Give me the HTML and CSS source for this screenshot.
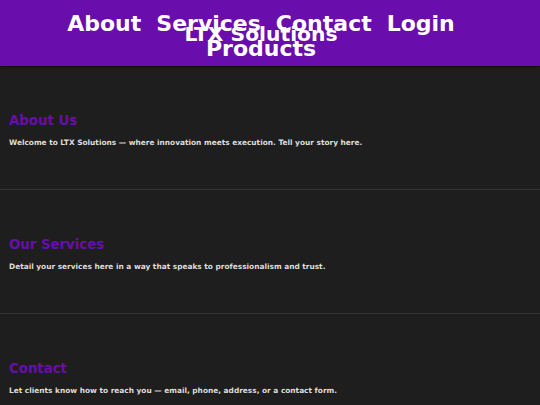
FILE: index.html
```html
<!DOCTYPE html>
<html lang="en">
<head>
    <meta charset="UTF-8">
    <meta name="viewport" content="width=device-width, initial-scale=1.0">
    <title>LTX Solutions</title>
    <link rel="stylesheet" href="styles.css">
</head>
<body>
    <header class="topbar">
        <h1 class="brand">LTX Solutions</h1>
        <nav class="nav">
            <a href="#about">About</a>
            <a href="#services">Services</a>
            <a href="#contact">Contact</a>
            <a href="#login">Login</a>
            <a href="#products">Products</a>
        </nav>
    </header>

    <section id="about" class="block">
        <h2>About Us</h2>
        <p>Welcome to LTX Solutions — where innovation meets execution. Tell your story here.</p>
    </section>

    <section id="services" class="block">
        <h2>Our Services</h2>
        <p>Detail your services here in a way that speaks to professionalism and trust.</p>
    </section>

    <section id="contact" class="block">
        <h2>Contact</h2>
        <p>Let clients know how to reach you — email, phone, address, or a contact form.</p>
    </section>
</body>
</html>
```

FILE: styles.css
```css
* {
    margin: 0;
    padding: 0;
    box-sizing: border-box;
    font-family: 'DejaVu Sans', sans-serif;
    font-weight: bold;
}

body {
    background-color: #1e1e1e;
    color: #dddddd;
}

.topbar {
    display: grid;
    align-items: center;
    justify-items: center;
    height: 66px;
    padding: 2px 28px 0 10px;
    background-color: #6a0dad;
    box-shadow: 0 1px 2px rgba(0, 0, 0, 0.6);
    color: #fff;
    text-align: center;
}

/* logo and links share the same cell */
.brand,
.nav {
    grid-area: 1 / 1;
}

.brand {
    font-size: 20.3px;
}

.nav {
    display: flex;
    flex-wrap: wrap;
    justify-content: center;
    column-gap: 15px;
    margin-top: 4px;
}

.nav a {
    color: #fff;
    text-decoration: none;
    font-size: 22px;
}

.block {
    padding: 47px 9px 42px;
    border-bottom: 1px solid #333;
}

.block h2 {
    color: #6a0dad;
    font-size: 13.3px;
    margin-bottom: 10px;
}

.block p {
    font-size: 7.4px;
}
```
